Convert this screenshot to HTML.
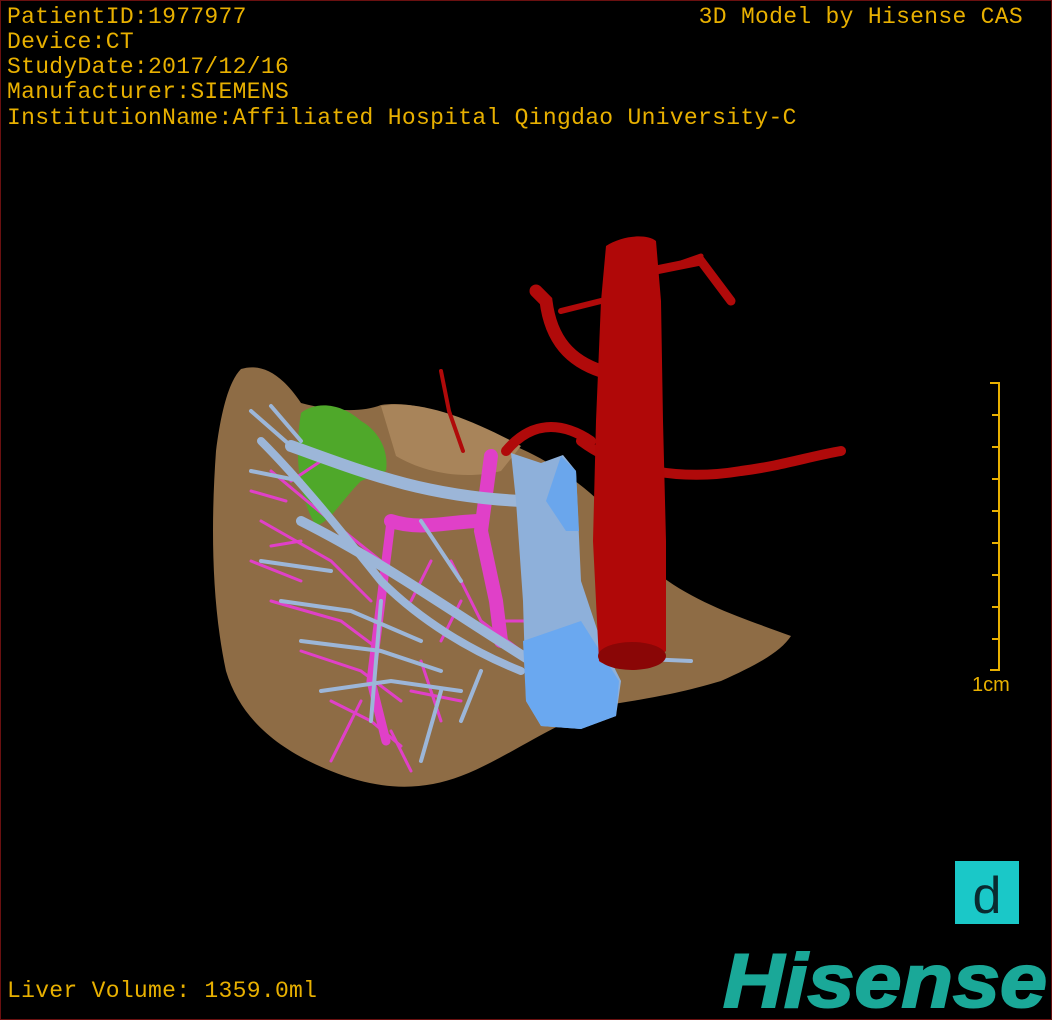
<!DOCTYPE html>
<html><head><meta charset="utf-8"><style>
html,body{margin:0;padding:0;background:#000;}
.wrap{position:relative;width:1050px;height:1018px;border:1px solid #6a1010;background:#000;overflow:hidden;}
.t{position:absolute;left:6px;color:#e8b000;font:23px "Liberation Mono",monospace;letter-spacing:0.3px;white-space:nowrap;line-height:25px;}
</style></head><body><div class="wrap">
<svg width="1050" height="1018" style="position:absolute;left:0;top:0">
<path d="M240 368 C260 362 280 372 300 402 C330 410 360 412 380 404 C420 398 460 420 500 440 C560 460 620 510 660 575 C700 605 750 620 790 635 C780 650 760 662 720 680 C670 695 630 700 600 705 C540 730 500 760 460 775 C420 790 380 790 330 770 C280 750 240 720 225 670 C210 600 210 520 215 450 C220 410 228 380 240 368Z" fill="#8e6c45"/>
<path d="M380 405 C420 398 470 418 520 445 L500 470 C460 480 420 470 395 455Z" fill="#a8845a"/>
<path d="M300 412 C315 400 340 402 360 420 C378 430 388 450 385 470 L360 480 C340 500 330 520 315 525 C300 500 292 460 300 412Z" fill="#4fa82a"/>
<g stroke="#e040c8" fill="none" stroke-linecap="round">
<path d="M490 455 L480 530 L495 600 L500 640" stroke-width="14"/>
<path d="M480 520 C450 520 420 530 390 520" stroke-width="14"/>
<path d="M390 520 L380 600 L370 680 L385 740" stroke-width="9"/>
<g stroke-width="3">
<path d="M270 470 L330 520 L380 560"/><path d="M260 520 L330 560 L370 600"/><path d="M270 600 L340 620 L380 650"/>
<path d="M300 650 L360 670 L400 700"/><path d="M330 700 L370 720 L400 745"/><path d="M420 660 L440 720"/>
<path d="M450 560 L480 620 L520 650"/><path d="M290 480 L320 460"/><path d="M250 560 L300 580"/>
<path d="M360 700 L340 740"/><path d="M410 690 L460 700"/><path d="M500 620 L560 620 L590 630"/>
<path d="M285 500 L250 490"/><path d="M300 540 L270 545"/><path d="M430 560 L410 600"/><path d="M460 600 L440 640"/>
<path d="M350 720 L330 760"/><path d="M390 730 L410 770"/><path d="M540 560 L560 600"/>
</g></g>
<g stroke="#9cb6d8" fill="none" stroke-linecap="round">
<path d="M290 445 C360 470 420 495 520 500" stroke-width="12"/>
<path d="M300 520 C380 560 450 610 530 660" stroke-width="10"/>
<path d="M260 440 C300 480 340 530 380 580 C420 620 470 650 520 670" stroke-width="8"/>
<g stroke-width="4">
<path d="M250 410 L290 445"/><path d="M270 405 L300 440"/><path d="M250 470 L300 480"/><path d="M260 560 L330 570"/>
<path d="M280 600 L350 610 L420 640"/><path d="M300 640 L380 650 L440 670"/><path d="M320 690 L390 680 L460 690"/>
<path d="M380 600 L370 720"/><path d="M440 690 L420 760"/><path d="M480 670 L460 720"/><path d="M420 520 L460 580"/>
<path d="M580 655 L690 660"/>
</g></g>
<g stroke="#b00a0a" fill="none" stroke-linecap="round">
<path d="M440 370 L448 410 L462 450" stroke-width="4"/>
<path d="M505 450 C530 420 560 420 590 440" stroke-width="10"/>
<path d="M580 440 C620 470 680 480 740 470 C780 465 810 455 840 450" stroke-width="10"/>
<path d="M600 370 C570 360 550 340 545 300 L535 290" stroke-width="13"/>
<path d="M560 310 L600 300" stroke-width="6"/>
<path d="M650 270 L700 260 L730 300" stroke-width="9"/>
<path d="M680 262 L700 255" stroke-width="5"/>
</g>
<path d="M510 452 L540 462 L562 454 L575 470 L580 580 L600 640 L620 680 L615 715 L580 728 L540 725 L525 700 L522 600 L515 500Z" fill="#8eb0da"/>
<path d="M560 455 L575 470 L578 530 L565 530 L545 500Z" fill="#6aa6ec"/>
<path d="M522 640 L580 620 L618 680 L615 715 L580 728 L540 725 L525 700Z" fill="#6aa8f0"/>
<path d="M605 245 C620 235 645 232 655 240 L660 300 L662 420 L665 540 L665 650 C650 665 610 670 598 660 L592 540 L595 420 L600 300Z" fill="#b00808"/>
<ellipse cx="631" cy="655" rx="34" ry="14" fill="#8a0606"/>
<g stroke="#e8b000" stroke-width="2">
<line x1="998" y1="381" x2="998" y2="670"/>
<line x1="989" y1="382" x2="998" y2="382"/><line x1="989" y1="669" x2="998" y2="669"/>
<line x1="991" y1="414" x2="998" y2="414"/><line x1="991" y1="446" x2="998" y2="446"/><line x1="991" y1="478" x2="998" y2="478"/>
<line x1="991" y1="510" x2="998" y2="510"/><line x1="991" y1="542" x2="998" y2="542"/><line x1="991" y1="574" x2="998" y2="574"/>
<line x1="991" y1="606" x2="998" y2="606"/><line x1="991" y1="638" x2="998" y2="638"/>
</g>
<text x="971" y="690" fill="#e8b000" font-family="Liberation Sans,sans-serif" font-size="20">1cm</text>
<rect x="954" y="860" width="64" height="63" fill="#1ac8c8"/>
<text x="986" y="912" text-anchor="middle" fill="#0a2a30" font-family="Liberation Sans,sans-serif" font-size="52">d</text>
<text x="722" y="1006" fill="#1aa898" stroke="#1aa898" stroke-width="2" font-family="Liberation Sans,sans-serif" font-weight="bold" font-style="italic" font-size="76" textLength="324" lengthAdjust="spacingAndGlyphs">Hisense</text>
</svg>
<div class="t" style="top:4px">PatientID:1977977</div>
<div class="t" style="top:29px">Device:CT</div>
<div class="t" style="top:54px">StudyDate:2017/12/16</div>
<div class="t" style="top:79px">Manufacturer:SIEMENS</div>
<div class="t" style="top:105px">InstitutionName:Affiliated Hospital Qingdao University-C</div>
<div class="t" style="top:4px;left:auto;right:28px">3D Model by Hisense CAS</div>
<div class="t" style="top:978px">Liver Volume: 1359.0ml</div>
</div></body></html>
